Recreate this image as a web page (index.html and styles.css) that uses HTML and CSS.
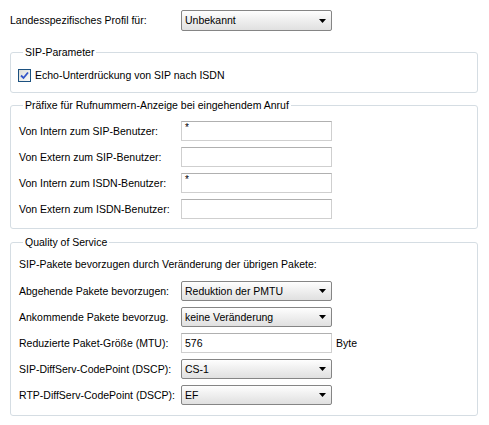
FILE: index.html
```html
<!DOCTYPE html>
<html lang="de">
<head>
<meta charset="utf-8">
<link rel="stylesheet" href="styles.css">
</head>
<body>
<div class="page">
  <div class="toprow">
    <span class="lbl">Landesspezifisches Profil für:</span>
    <div class="select"><span>Unbekannt</span><svg class="arrow" width="7" height="4" viewBox="0 0 7 4"><path d="M0 0H7L3.5 4Z" fill="#000"/></svg></div>
  </div>

  <fieldset class="group g1">
    <legend>SIP-Parameter</legend>
    <label class="check">
      <span class="box"><svg width="11" height="11" viewBox="0 0 11 11"><path d="M2 5.5L4.5 8L9 2.5" fill="none" stroke="#3355c8" stroke-width="1.8"/></svg></span>
      <span>Echo-Unterdrückung von SIP nach ISDN</span>
    </label>
  </fieldset>

  <fieldset class="group g2">
    <legend>Präfixe für Rufnummern-Anzeige bei eingehendem Anruf</legend>
    <div class="grid">
      <span class="lbl">Von Intern zum SIP-Benutzer:</span><div class="input star">*</div><span></span>
      <span class="lbl">Von Extern zum SIP-Benutzer:</span><div class="input"></div><span></span>
      <span class="lbl">Von Intern zum ISDN-Benutzer:</span><div class="input star">*</div><span></span>
      <span class="lbl">Von Extern zum ISDN-Benutzer:</span><div class="input"></div><span></span>
    </div>
  </fieldset>

  <fieldset class="group g3">
    <legend>Quality of Service</legend>
    <p class="intro">SIP-Pakete bevorzugen durch Veränderung der übrigen Pakete:</p>
    <div class="grid">
      <span class="lbl">Abgehende Pakete bevorzugen:</span>
      <div class="select"><span>Reduktion der PMTU</span><svg class="arrow" width="7" height="4" viewBox="0 0 7 4"><path d="M0 0H7L3.5 4Z" fill="#000"/></svg></div><span></span>
      <span class="lbl">Ankommende Pakete bevorzug.</span>
      <div class="select"><span>keine Veränderung</span><svg class="arrow" width="7" height="4" viewBox="0 0 7 4"><path d="M0 0H7L3.5 4Z" fill="#000"/></svg></div><span></span>
      <span class="lbl">Reduzierte Paket-Größe (MTU):</span>
      <div class="input num">576</div><span class="unit">Byte</span>
      <span class="lbl">SIP-DiffServ-CodePoint (DSCP):</span>
      <div class="select"><span>CS-1</span><svg class="arrow" width="7" height="4" viewBox="0 0 7 4"><path d="M0 0H7L3.5 4Z" fill="#000"/></svg></div><span></span>
      <span class="lbl">RTP-DiffServ-CodePoint (DSCP):</span>
      <div class="select"><span>EF</span><svg class="arrow" width="7" height="4" viewBox="0 0 7 4"><path d="M0 0H7L3.5 4Z" fill="#000"/></svg></div><span></span>
    </div>
  </fieldset>
</div>
</body>
</html>
```
FILE: styles.css
```css
* { box-sizing: border-box; }
html, body { margin: 0; padding: 0; background: #fff; }
body {
  font-family: "Liberation Sans", Arial, sans-serif;
  font-size: 10.5px;
  line-height: 13px;
  color: #000;
}
.page {
  padding: 10px 11px 0 10px;
  width: 489px;
}
.toprow {
  display: flex;
  align-items: center;
  height: 21px;
}
.toprow .lbl { width: 171px; }
.lbl { white-space: nowrap; }
.select {
  width: 151px;
  height: 21px;
  border: 1px solid #858585;
  border-radius: 2px;
  background: linear-gradient(#fefefe, #f0f0f0 45%, #e0e0e0);
  display: flex;
  align-items: center;
  justify-content: space-between;
  padding: 0 5px 0 3px;
}
.grid .select { height: 20px; }
.arrow { display: block; }
.group {
  margin: 0;
  border: 1px solid #d5dde3;
  border-radius: 3px;
  padding: 0 8px;
}
.group legend {
  padding: 0 2px;
  margin-left: 4px;
  line-height: 13px;
}
.g1 { margin-top: 15px; height: 47px; padding-top: 10px; }
.g2 { margin-top: 6px; height: 130px; padding-top: 9px; }
.g3 { margin-top: 7px; height: 180px; padding-top: 8px; }
.check { display: flex; align-items: center; gap: 4px; margin-left: -1px; }
.box {
  width: 13px; height: 13px;
  border: 1px solid #1c5180;
  background: linear-gradient(135deg, #dcdcd7, #fbfbf9);
  display: flex; align-items: center; justify-content: center;
}
.box svg { display: block; }
.grid {
  display: grid;
  grid-template-columns: 162px 151px auto;
  grid-auto-rows: 20px;
  row-gap: 6px;
  align-items: center;
}
.grid .lbl, .grid .unit { align-self: center; }
.unit { padding-left: 4px; }
.input {
  height: 20px;
  border: 1px solid #cfcfcf;
  border-top-color: #b0b0b0;
  background: #fff;
  padding: 0 3px;
  display: flex;
  align-items: center;
}
.input.star { align-items: flex-start; padding-top: 2px; font-size: 10px; line-height: 8px; }
.intro { margin: 1px 0 10px; }
```
